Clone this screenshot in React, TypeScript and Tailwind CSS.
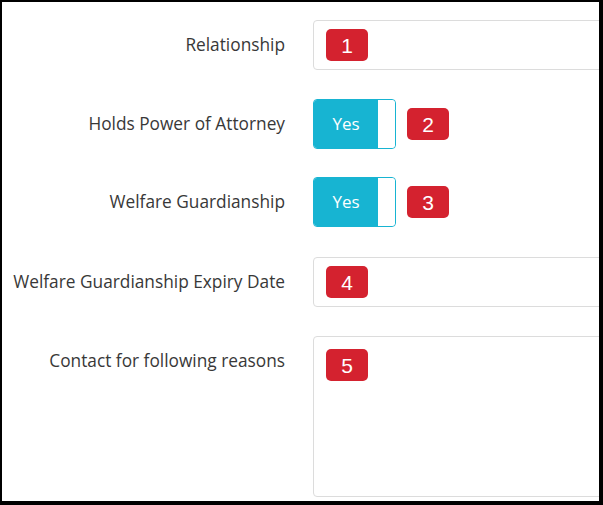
import React from "react";

const Badge = ({ n }: { n: number }) => (
  <span className="flex h-[32px] w-[42px] items-center justify-center rounded-[5px] bg-[#d4222f] text-[21px] leading-none text-white [font-family:'Liberation_Sans',Arial,sans-serif]">
    {n}
  </span>
);

const Label = ({ children }: { children: React.ReactNode }) => (
  <div className="flex h-[50px] w-[283px] shrink-0 items-center justify-end text-[17.3px] text-[#383838]">
    {children}
  </div>
);

const Toggle = () => (
  <div className="flex h-[50px] w-[83px] overflow-hidden rounded-[4px] border border-[#17b4d2]">
    <div className="flex flex-1 items-center justify-center bg-[#17b4d2] text-[17px] text-white">
      Yes
    </div>
    <div className="w-[17px] rounded-r-[3px] bg-white" />
  </div>
);

export default function App() {
  return (
    <div className="h-[505px] w-[603px] overflow-hidden border-t-2 border-l-2 border-r-4 border-b-4 border-black bg-white pt-[18px] [font-family:'Open_Sans',sans-serif]">
      <div className="flex flex-col gap-[29px]">
        <div className="flex items-start gap-[28px]">
          <Label>Relationship</Label>
          <div className="flex h-[50px] w-[320px] shrink-0 items-center rounded-[4px] border border-[#dcdcdc] pl-[12px]">
            <Badge n={1} />
          </div>
        </div>

        <div className="flex items-start gap-[28px]">
          <Label>Holds Power of Attorney</Label>
          <div className="flex items-center gap-[11px]">
            <Toggle />
            <Badge n={2} />
          </div>
        </div>

        <div className="-mt-[1px] flex items-start gap-[28px]">
          <Label>Welfare Guardianship</Label>
          <div className="flex items-center gap-[11px]">
            <Toggle />
            <Badge n={3} />
          </div>
        </div>

        <div className="mt-[1px] flex items-start gap-[28px]">
          <Label>Welfare Guardianship Expiry Date</Label>
          <div className="flex h-[50px] w-[320px] shrink-0 items-center rounded-[4px] border border-[#dcdcdc] pl-[12px]">
            <Badge n={4} />
          </div>
        </div>

        <div className="flex items-start gap-[28px]">
          <Label>Contact for following reasons</Label>
          <div className="h-[161px] w-[320px] shrink-0 rounded-[4px] border border-[#dcdcdc] pl-[12px] pt-[12px]">
            <Badge n={5} />
          </div>
        </div>
      </div>
    </div>
  );
}
